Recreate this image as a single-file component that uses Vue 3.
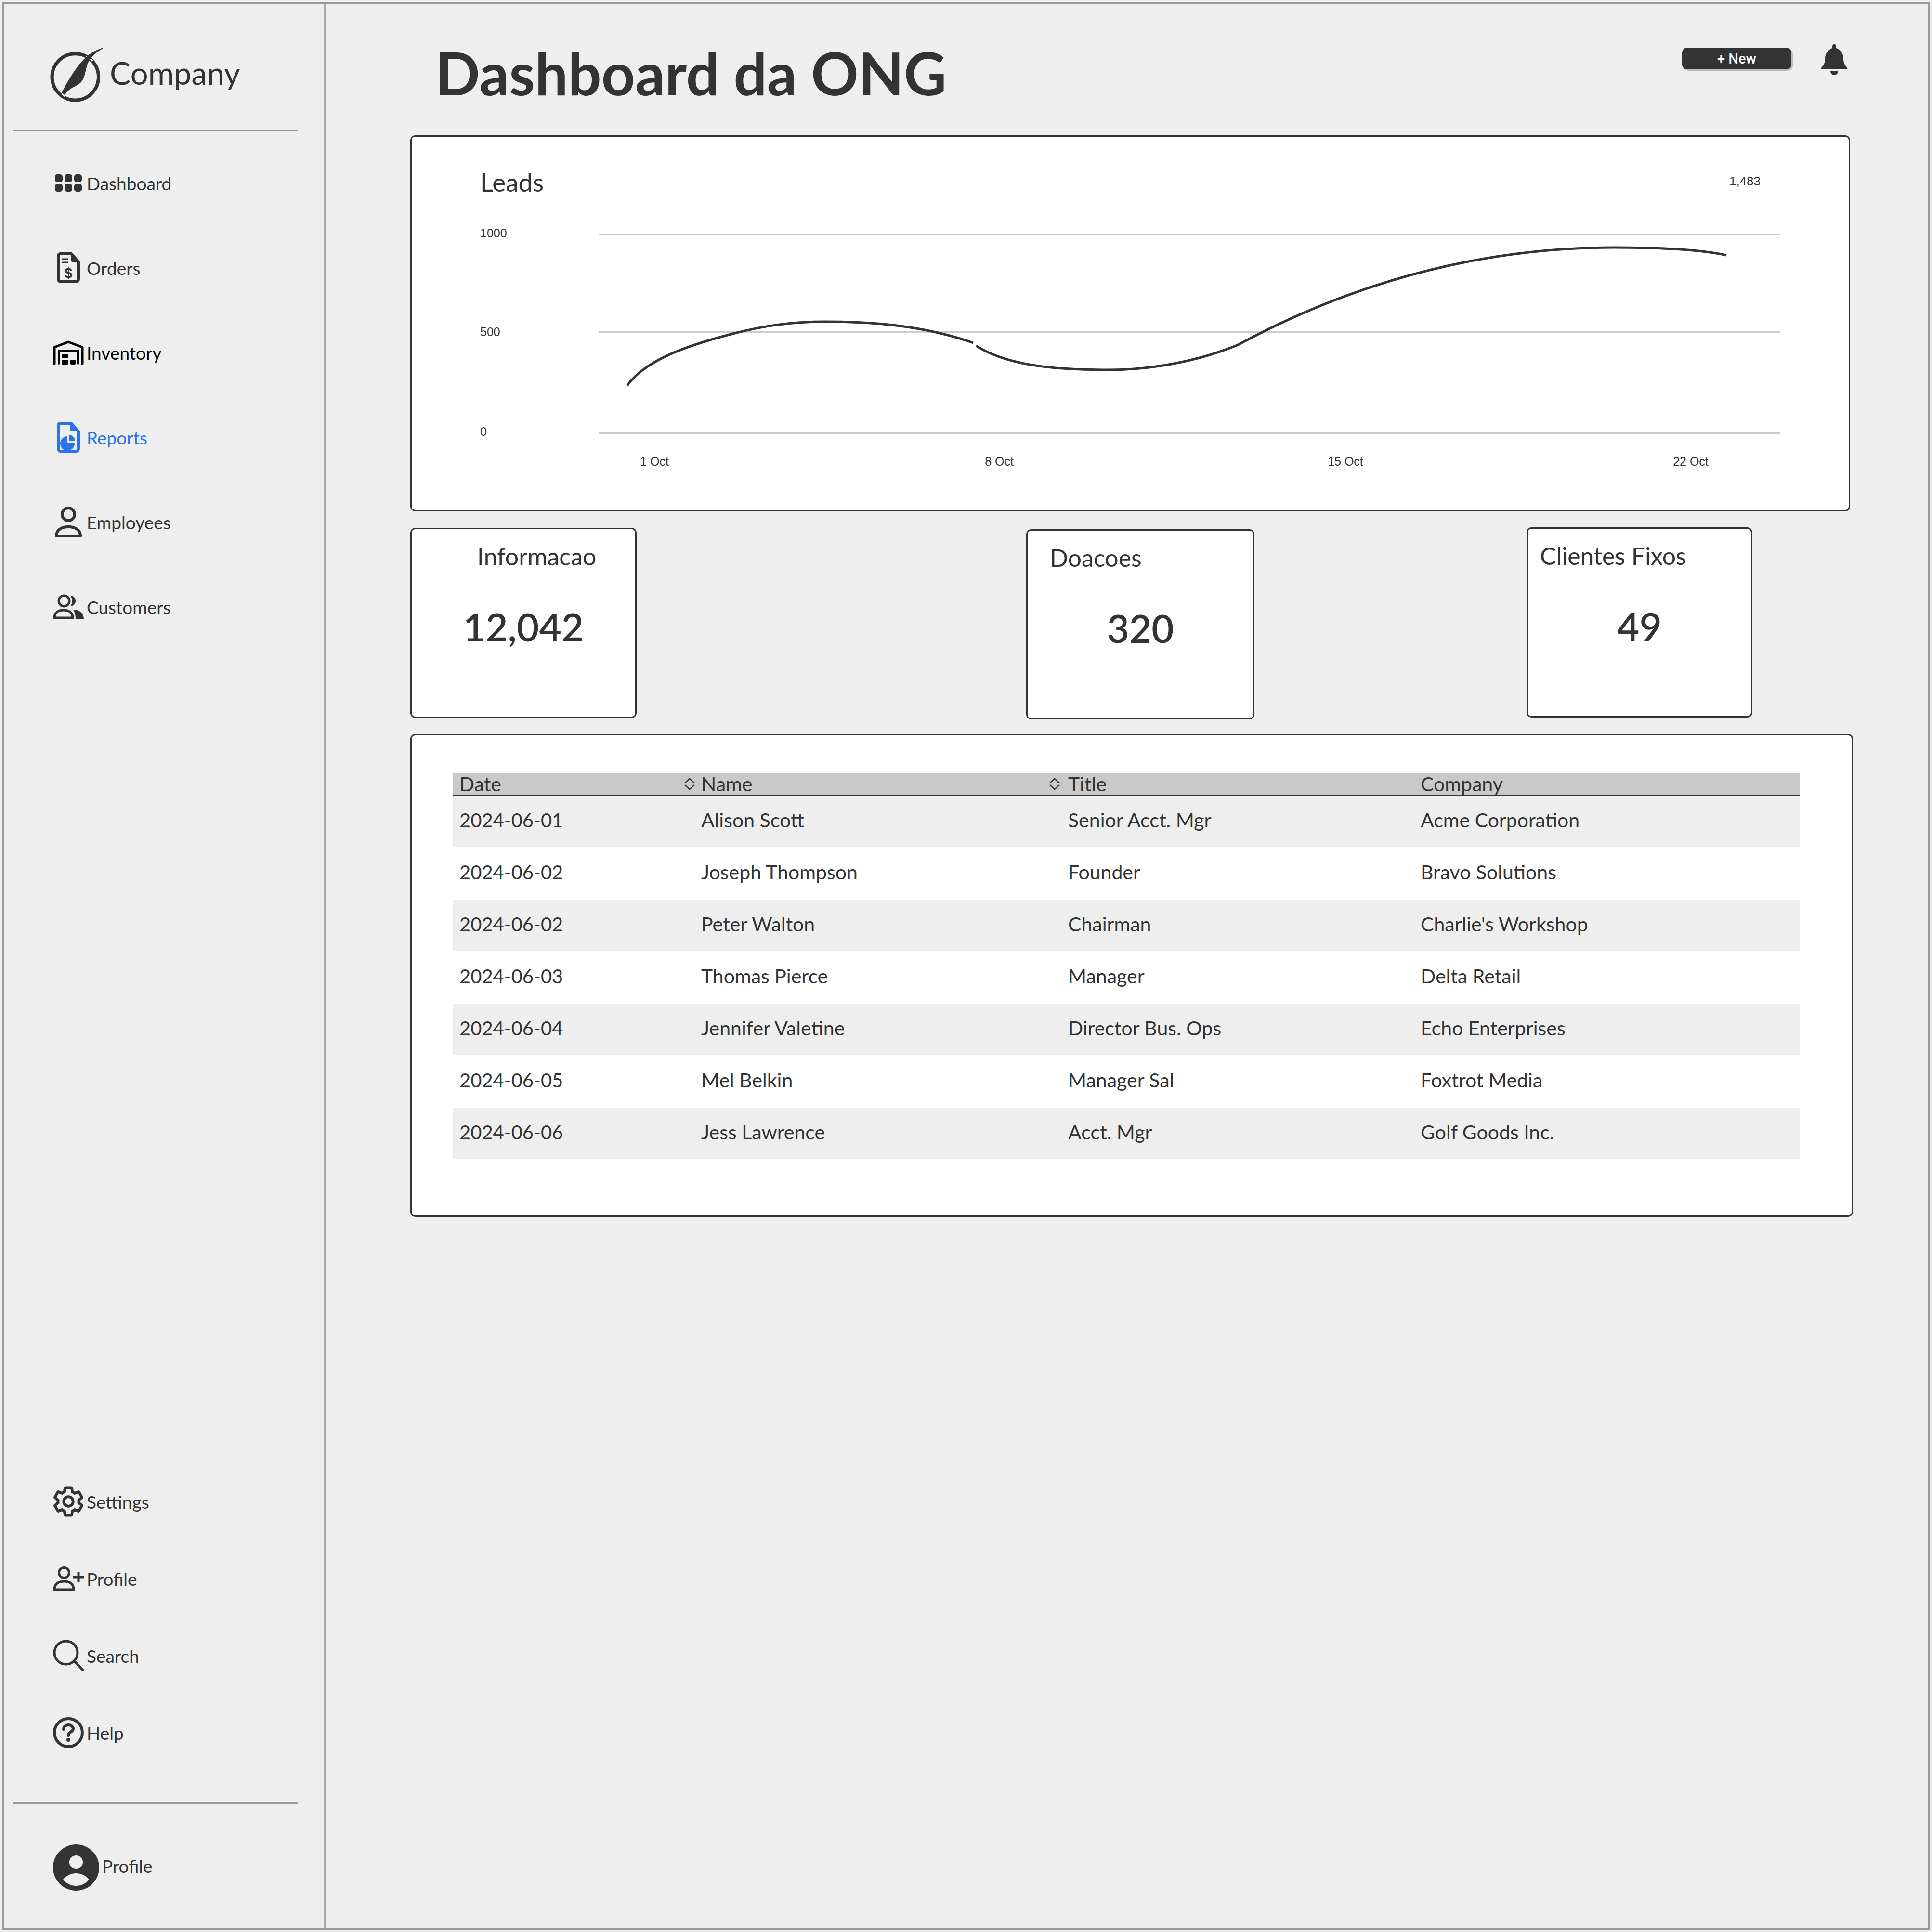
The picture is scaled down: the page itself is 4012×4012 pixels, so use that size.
<template>
  <div class="page">
    <aside class="sidebar">
      <div class="brand">
        <svg class="logo" viewBox="230 215 250 262">
          <circle cx="349" cy="358" r="108" fill="none" stroke="#333" stroke-width="16" />
          <path d="M400 262C412 268 424 276 430 284M288 436L302 448" fill="none" stroke="#eee" stroke-width="8" />
          <path d="M476 222C440 235 410 250 380 285C345 325 315 375 285 432L300 442C320 410 345 405 365 392C390 375 395 340 402 310C410 280 440 245 476 227Z" fill="#333" />
        </svg>
        <span class="brand-name">Company</span>
      </div>

      <nav class="nav">
        <a class="nav-item">
          <span class="nav-icon">
            <svg width="56" height="36" viewBox="0 0 56 36" fill="#333">
              <rect x="0" y="0" width="16" height="16" rx="5" />
              <rect x="20" y="0" width="16" height="16" rx="5" />
              <rect x="40" y="0" width="16" height="16" rx="5" />
              <rect x="0" y="20" width="16" height="16" rx="5" />
              <rect x="20" y="20" width="16" height="16" rx="5" />
              <rect x="40" y="20" width="16" height="16" rx="5" />
            </svg>
          </span>
          <span>Dashboard</span>
        </a>
        <a class="nav-item">
          <span class="nav-icon">
            <svg width="48" height="64" viewBox="0 0 48 64">
              <path d="M7 3H30L45 20V56a5 5 0 0 1-5 5H8a5 5 0 0 1-5-5V7a4 4 0 0 1 4-4Z" fill="none" stroke="#333" stroke-width="6" stroke-linejoin="round" />
              <path d="M29 3L45 20H33a4 4 0 0 1-4-4Z" fill="#333" />
              <path d="M10 14H23M10 21H23" stroke="#333" stroke-width="3" />
              <text x="24" y="53" class="dollar">$</text>
            </svg>
          </span>
          <span>Orders</span>
        </a>
        <a class="nav-item nav-item-dark">
          <span class="nav-icon">
            <svg width="64" height="50" viewBox="0 0 64 50">
              <path d="M3 48V14L32 3L61 14V48" fill="none" stroke="#000" stroke-width="5" stroke-linecap="round" stroke-linejoin="round" />
              <path d="M12 48V21H52V48" fill="none" stroke="#000" stroke-width="4" stroke-linecap="round" />
              <rect x="18" y="28" width="14" height="9" rx="2" />
              <rect x="18" y="40" width="14" height="10" rx="2" />
              <rect x="36" y="40" width="11" height="10" rx="2" />
            </svg>
          </span>
          <span>Inventory</span>
        </a>
        <a class="nav-item nav-item-active">
          <span class="nav-icon">
            <svg width="48" height="64" viewBox="0 0 48 64" fill="#2a73e8">
              <path d="M7 3H30L45 20V56a5 5 0 0 1-5 5H8a5 5 0 0 1-5-5V7a4 4 0 0 1 4-4Z" fill="none" stroke="#2a73e8" stroke-width="6" stroke-linejoin="round" />
              <path d="M28 2L46 20H32a4 4 0 0 1-4-4Z" />
              <path d="M22 30V44H37A15 15 0 1 1 22 30Z" />
              <path d="M26 27A13 13 0 0 1 38 40H26Z" />
            </svg>
          </span>
          <span>Reports</span>
        </a>
        <a class="nav-item">
          <span class="nav-icon">
            <svg width="56" height="64" viewBox="0 0 56 64" fill="none" stroke="#333" stroke-width="6">
              <circle cx="28" cy="16" r="13" />
              <path d="M3 61C3 48 14 42 28 42C42 42 53 48 53 61Z" stroke-linejoin="round" />
            </svg>
          </span>
          <span>Employees</span>
        </a>
        <a class="nav-item">
          <span class="nav-icon">
            <svg width="64" height="52" viewBox="0 0 64 52">
              <circle cx="23" cy="14" r="11" fill="none" stroke="#333" stroke-width="5" />
              <path d="M3 49C3 38 11 33 22 33C33 33 41 38 41 49Z" fill="none" stroke="#333" stroke-width="5" stroke-linejoin="round" />
              <path d="M36 3A11 11 0 1 1 36 25C41 19 41 9 36 3Z" fill="#333" />
              <path d="M42 32C56 32 64 40 64 52H47C47 44 46 38 42 32Z" fill="#333" />
            </svg>
          </span>
          <span>Customers</span>
        </a>
      </nav>

      <nav class="nav nav-bottom">
        <a class="nav-item">
          <span class="nav-icon">
            <svg width="62" height="64" viewBox="1.2 1.2 21.6 21.6" fill="none" stroke="#333" stroke-width="2">
              <path d="M19.43 12.98c.04-.32.07-.64.07-.98 0-.34-.03-.66-.07-.98l2.11-1.65c.19-.15.24-.42.12-.64l-2-3.46c-.09-.16-.26-.25-.44-.25-.06 0-.12.01-.17.03l-2.49 1c-.52-.4-1.08-.73-1.69-.98l-.38-2.65C14.46 2.18 14.25 2 14 2h-4c-.25 0-.46.18-.49.42l-.38 2.65c-.61.25-1.17.59-1.69.98l-2.49-1c-.06-.02-.12-.03-.18-.03-.17 0-.34.09-.43.25l-2 3.46c-.13.22-.07.49.12.64l2.11 1.65c-.04.32-.07.65-.07.98 0 .33.03.66.07.98l-2.11 1.65c-.19.15-.24.42-.12.64l2 3.46c.09.16.26.25.44.25.06 0 .12-.01.17-.03l2.49-1c.52.4 1.08.73 1.69.98l.38 2.65c.03.24.24.42.49.42h4c.25 0 .46-.18.49-.42l.38-2.65c.61-.25 1.17-.59 1.69-.98l2.49 1c.06.02.12.03.18.03.17 0 .34-.09.43-.25l2-3.46c.12-.22.07-.49-.12-.64l-2.11-1.65z" />
              <circle cx="12" cy="12" r="3.4" />
            </svg>
          </span>
          <span>Settings</span>
        </a>
        <a class="nav-item">
          <span class="nav-icon">
            <svg width="64" height="51" viewBox="0 0 64 51" fill="none" stroke="#333" stroke-width="5">
              <circle cx="23" cy="13" r="10.5" />
              <path d="M3 48C3 36 11 31 23 31C35 31 43 36 43 48Z" stroke-linejoin="round" />
              <path d="M42 22H64M53 11V33" />
            </svg>
          </span>
          <span>Profile</span>
        </a>
        <a class="nav-item">
          <span class="nav-icon">
            <svg width="64" height="64" viewBox="0 0 64 64" fill="none" stroke="#333" stroke-width="5">
              <circle cx="27" cy="26" r="24" />
              <path d="M44 43L62 62" stroke-linecap="round" />
            </svg>
          </span>
          <span>Search</span>
        </a>
        <a class="nav-item">
          <span class="nav-icon">
            <svg width="64" height="64" viewBox="0 0 64 64" fill="none" stroke="#333" stroke-width="6">
              <circle cx="32" cy="32" r="29" />
              <path d="M22 25C22 19 27 16 32 16C38 16 42 20 42 24C42 31 32 30 32 38" stroke-width="6" stroke-linecap="round" />
              <circle cx="32" cy="47" r="4" fill="#333" stroke="none" />
            </svg>
          </span>
          <span>Help</span>
        </a>
      </nav>

      <div class="profile">
        <svg width="96" height="96" viewBox="0 0 96 96">
          <circle cx="48" cy="48" r="48" fill="#333" />
          <circle cx="48" cy="37" r="14" fill="#eee" />
          <path d="M21 73C28 64 38 60 48 60C58 60 68 64 75 73C68 82 58 86 48 86C38 86 28 82 21 73Z" fill="#eee" />
        </svg>
        <span>Profile</span>
      </div>
    </aside>

    <main class="main">
      <header class="topbar">
        <h1 class="title">Dashboard da ONG</h1>
        <div class="actions">
          <button class="btn-new">+ New</button>
          <svg class="bell" width="56" height="64" viewBox="0 0 56 64" fill="#333">
            <path d="M24 8V4a4 4 0 0 1 8 0V8C41 11 47 19 47 30C47 40 51 44 55 49a2 2 0 0 1-2 3H3a2 2 0 0 1-2-3C5 44 9 40 9 30C9 19 15 11 24 8Z" />
            <path d="M20 56H36A8 8 0 0 1 20 56Z" />
          </svg>
        </div>
      </header>

      <section class="card chart-card">
        <div class="chart-head">
          <span class="chart-title">Leads</span>
          <span class="chart-total">1,483</span>
        </div>
        <svg class="chart" width="2984" height="620" viewBox="855 440 2984 620">
          <g stroke="#ccc" stroke-width="4">
            <line x1="1243" y1="487" x2="3697" y2="487" />
            <line x1="1244" y1="689" x2="3697" y2="689" />
            <line x1="1243" y1="899" x2="3697" y2="899" />
          </g>
          <g class="axis">
            <text x="997" y="493">1000</text>
            <text x="997" y="698">500</text>
            <text x="997" y="905">0</text>
            <text v-for="t in ticks" :key="t.label" :x="t.x" y="967" text-anchor="middle">{{ t.label }}</text>
          </g>
          <g fill="none" stroke="#333" stroke-width="5">
            <path d="M1302 801C1340 748 1425 718 1518 694C1590 675 1650 668 1714 668C1830 668 1930 680 2021 712" />
            <path d="M2027 718C2100 765 2220 768 2303 768C2390 768 2490 750 2571 716C2730 630 3000 514 3352 514C3440 514 3530 518 3585 530" />
          </g>
        </svg>
      </section>

      <section class="stats">
        <div class="card stat stat-1">
          <div class="stat-title">Informacao</div>
          <div class="stat-value">12,042</div>
        </div>
        <div class="card stat stat-2">
          <div class="stat-title">Doacoes</div>
          <div class="stat-value">320</div>
        </div>
        <div class="card stat stat-3">
          <div class="stat-title">Clientes Fixos</div>
          <div class="stat-value">49</div>
        </div>
      </section>

      <section class="card table-card">
        <table class="table">
          <colgroup>
            <col class="col-date" />
            <col class="col-name" />
            <col class="col-job" />
            <col />
          </colgroup>
          <thead>
            <tr>
              <th>
                <div class="th-inner">
                  <span>Date</span>
                  <svg class="sort" width="24" height="28" viewBox="0 0 24 28" fill="none" stroke="#333" stroke-width="2.5"><path d="M2 12L12 3L22 12M2 16L12 25L22 16" /></svg>
                </div>
              </th>
              <th>
                <div class="th-inner">
                  <span>Name</span>
                  <svg class="sort" width="24" height="28" viewBox="0 0 24 28" fill="none" stroke="#333" stroke-width="2.5"><path d="M2 12L12 3L22 12M2 16L12 25L22 16" /></svg>
                </div>
              </th>
              <th>Title</th>
              <th>Company</th>
            </tr>
          </thead>
          <tbody>
            <tr v-for="row in rows" :key="row.name">
              <td>{{ row.date }}</td>
              <td>{{ row.name }}</td>
              <td>{{ row.title }}</td>
              <td>{{ row.company }}</td>
            </tr>
          </tbody>
        </table>
      </section>
    </main>
  </div>
</template>

<script setup>
const ticks = [
  { label: '1 Oct', x: 1359 },
  { label: '8 Oct', x: 2075 },
  { label: '15 Oct', x: 2794 },
  { label: '22 Oct', x: 3511 }
]

const rows = [
  { date: '2024-06-01', name: 'Alison Scott', title: 'Senior Acct. Mgr', company: 'Acme Corporation' },
  { date: '2024-06-02', name: 'Joseph Thompson', title: 'Founder', company: 'Bravo Solutions' },
  { date: '2024-06-02', name: 'Peter Walton', title: 'Chairman', company: "Charlie's Workshop" },
  { date: '2024-06-03', name: 'Thomas Pierce', title: 'Manager', company: 'Delta Retail' },
  { date: '2024-06-04', name: 'Jennifer Valetine', title: 'Director Bus. Ops', company: 'Echo Enterprises' },
  { date: '2024-06-05', name: 'Mel Belkin', title: 'Manager Sal', company: 'Foxtrot Media' },
  { date: '2024-06-06', name: 'Jess Lawrence', title: 'Acct. Mgr', company: 'Golf Goods Inc.' }
]
</script>

<style>
html,
body {
  margin: 0;
  background: #eee;
}
</style>

<style scoped>
.page {
  box-sizing: border-box;
  width: 4002px;
  height: 4002px;
  margin: 5px;
  display: flex;
  background: #eee;
  border: 4px solid #999;
  font-family: Lato, "Liberation Sans", sans-serif;
  color: #333;
}

.sidebar {
  box-sizing: border-box;
  width: 669px;
  flex: none;
  display: flex;
  flex-direction: column;
  border-right: 5px solid #aaa;
}

.brand {
  box-sizing: border-box;
  height: 263px;
  margin: 0 55px 0 17px;
  padding: 87px 0 0 77px;
  display: flex;
  align-items: flex-start;
  gap: 13px;
  border-bottom: 3px solid #999;
}

.logo {
  width: 112px;
  height: 117px;
  flex: none;
}

.brand-name {
  font-size: 65px;
  line-height: 100px;
  margin-top: 5px;
}

.nav {
  margin-top: 21px;
  padding-left: 101px;
}

.nav-item {
  height: 176px;
  padding-bottom: 2px;
  box-sizing: border-box;
  display: flex;
  align-items: center;
  font-size: 37px;
}

.nav-icon {
  width: 64px;
  margin-right: 6px;
  display: flex;
  justify-content: center;
}

.nav-item-dark {
  color: #000;
}

.nav-item-active {
  color: #2a73e8;
}

.dollar {
  font-family: "Liberation Sans", sans-serif;
  font-size: 30px;
  font-weight: 700;
  fill: #333;
  text-anchor: middle;
}

.nav-bottom {
  margin-top: auto;
}

.nav-bottom .nav-item {
  height: 160px;
}

.profile {
  box-sizing: border-box;
  height: 260px;
  margin: 64px 55px 0 17px;
  padding: 84px 0 0 84px;
  display: flex;
  align-items: flex-start;
  gap: 6px;
  border-top: 3px solid #999;
  font-size: 37px;
  line-height: 90px;
}

.main {
  flex: 1;
  padding-left: 174px;
  min-width: 0;
}

.topbar {
  height: 272px;
  display: flex;
  justify-content: space-between;
  align-items: flex-start;
}

.title {
  margin: 74px 0 0 52px;
  font-size: 122px;
  line-height: 136px;
  font-weight: 700;
}

.actions {
  margin: 83px 166px 0 0;
  display: flex;
  align-items: flex-start;
  gap: 61px;
}

.btn-new {
  width: 227px;
  height: 45px;
  margin-top: 7px;
  padding: 0;
  border: none;
  border-radius: 10px;
  background: #333;
  color: #fff;
  font-family: Roboto, sans-serif;
  font-size: 29px;
  font-weight: 500;
  box-shadow: 3px 3px 0 #bbb;
}

.bell {
  flex: none;
}

.card {
  box-sizing: border-box;
  background: #fff;
  border: 3px solid #333;
  border-radius: 10px;
}

.chart-card {
  width: 2990px;
  height: 781px;
}

.chart-head {
  box-sizing: border-box;
  height: 156px;
  padding: 64px 183px 0 142px;
  display: flex;
  justify-content: space-between;
  align-items: flex-start;
}

.chart-title {
  font-size: 53px;
  line-height: 60px;
}

.chart-total {
  margin-top: -2px;
  font-family: "Liberation Sans", sans-serif;
  font-size: 26px;
  line-height: 60px;
}

.chart {
  display: block;
}

.axis {
  font-family: "Liberation Sans", sans-serif;
  font-size: 25px;
  fill: #333;
}

.stats {
  margin-top: 33px;
  display: flex;
  align-items: flex-start;
}

.stat {
  height: 395px;
  text-align: center;
}

.stat-1 {
  width: 470px;
  margin-top: 1px;
}

.stat-2 {
  width: 474px;
  margin-top: 4px;
  margin-left: 809px;
}

.stat-3 {
  width: 469px;
  margin-left: 565px;
}

.stat-title {
  font-size: 50px;
  line-height: 60px;
  margin-top: 26px;
  text-align: left;
}

.stat-1 .stat-title {
  padding-left: 136px;
}

.stat-2 .stat-title {
  padding-left: 46px;
}

.stat-3 .stat-title {
  padding-left: 25px;
}

.stat-value {
  margin-top: 66px;
  font-size: 80px;
  line-height: 100px;
  font-weight: 600;
}

.table-card {
  width: 2996px;
  height: 1003px;
  margin-top: 30px;
  padding: 79px 0 0 85px;
}

.table {
  width: 2798px;
  table-layout: fixed;
  border-collapse: collapse;
  font-size: 41px;
}

.col-date {
  width: 508px;
}

.col-name {
  width: 758px;
}

.col-job {
  width: 732px;
}

.table th {
  height: 44px;
  padding: 0 4px 0 12px;
  background: #c9c9c9;
  border-bottom: 3px solid #333;
  font-weight: 400;
  line-height: 38px;
  text-align: left;
}

.table th:first-child,
.table td:first-child {
  padding-left: 14px;
}

.table td:first-child {
  font-size: 40px;
}

.table th:nth-child(2),
.table td:nth-child(2) {
  padding-left: 8px;
}

.th-inner {
  display: flex;
  justify-content: space-between;
  align-items: center;
}

.table td {
  padding: 0 4px 7px 12px;
  line-height: 48px;
}

.table tbody tr:nth-child(odd) td {
  height: 99px;
  background: #eee;
}

.table tbody tr:nth-child(even) td {
  height: 103px;
}
</style>
